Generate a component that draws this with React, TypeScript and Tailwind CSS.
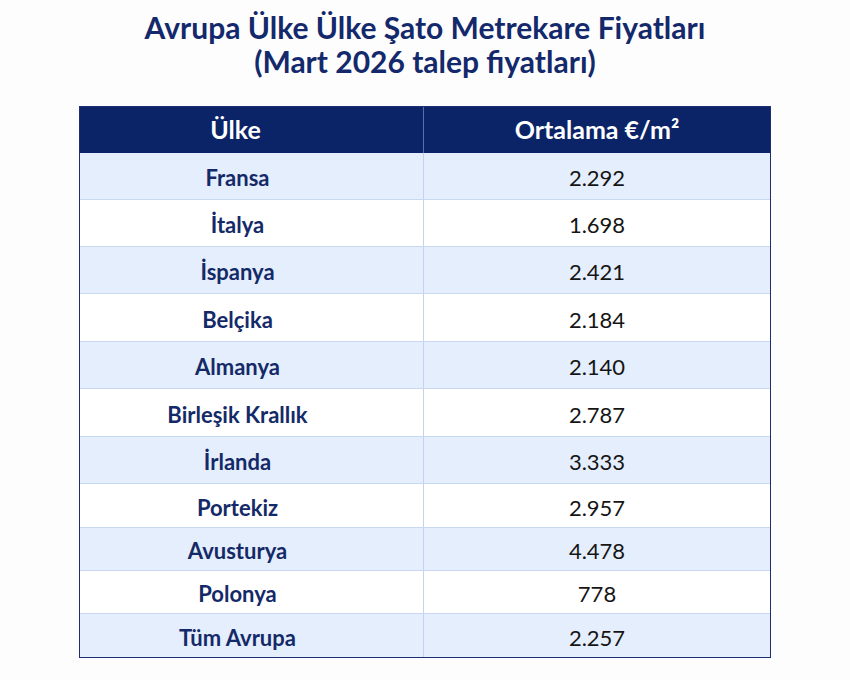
const rows: { country: string; price: string; h: string }[] = [
  { country: "Fransa", price: "2.292", h: "h-[47px]" },
  { country: "İtalya", price: "1.698", h: "h-[47px]" },
  { country: "İspanya", price: "2.421", h: "h-[47px]" },
  { country: "Belçika", price: "2.184", h: "h-[48px]" },
  { country: "Almanya", price: "2.140", h: "h-[47px]" },
  { country: "Birleşik Krallık", price: "2.787", h: "h-[48px]" },
  { country: "İrlanda", price: "3.333", h: "h-[47px]" },
  { country: "Portekiz", price: "2.957", h: "h-[44px]" },
  { country: "Avusturya", price: "4.478", h: "h-[43px]" },
  { country: "Polonya", price: "778", h: "h-[43px]" },
  { country: "Tüm Avrupa", price: "2.257", h: "h-[43px]" },
];

export default function App() {
  return (
    <div
      className="flex h-[680px] w-[850px] flex-col items-center bg-[#fdfdfe] pt-[10px]"
      style={{ fontFamily: "Lato, 'Open Sans', sans-serif" }}
    >
      <h1 className="text-center text-[30px] font-bold leading-[34px] text-[#13296b]">
        Avrupa Ülke Ülke Şato Metrekare Fiyatları
        <br />
        (Mart 2026 talep fiyatları)
      </h1>

      <div className="mt-[28px] w-[692px] border-[1.5px] border-[#1d2f6f]">
        <div className="grid h-[46px] grid-cols-[344px_1fr] bg-[#0b2467] font-bold text-white">
          <div className="flex items-center justify-center border-r border-[#5a6fa6] pr-[32px] text-[25px]">Ülke</div>
          <div className="flex items-center justify-center text-[25px]">Ortalama €/m²</div>
        </div>

        {rows.map((row, index) => (
          <div
            key={row.country}
            className={`grid grid-cols-[344px_1fr] ${row.h} ${
              index < rows.length - 1 ? "border-b border-[#c9d8f1]" : ""
            } ${index % 2 === 0 ? "bg-[#e5eefc]" : "bg-white"}`}
          >
            <div className="flex items-center justify-center border-r border-[#c3d3ee] pr-[28px] pt-[3px] text-[22px] font-bold text-[#142a68]">
              {row.country}
            </div>
            <div className="flex items-center justify-center pt-[3px] text-[22px] text-[#151515]">
              {row.price}
            </div>
          </div>
        ))}
      </div>
    </div>
  );
}
